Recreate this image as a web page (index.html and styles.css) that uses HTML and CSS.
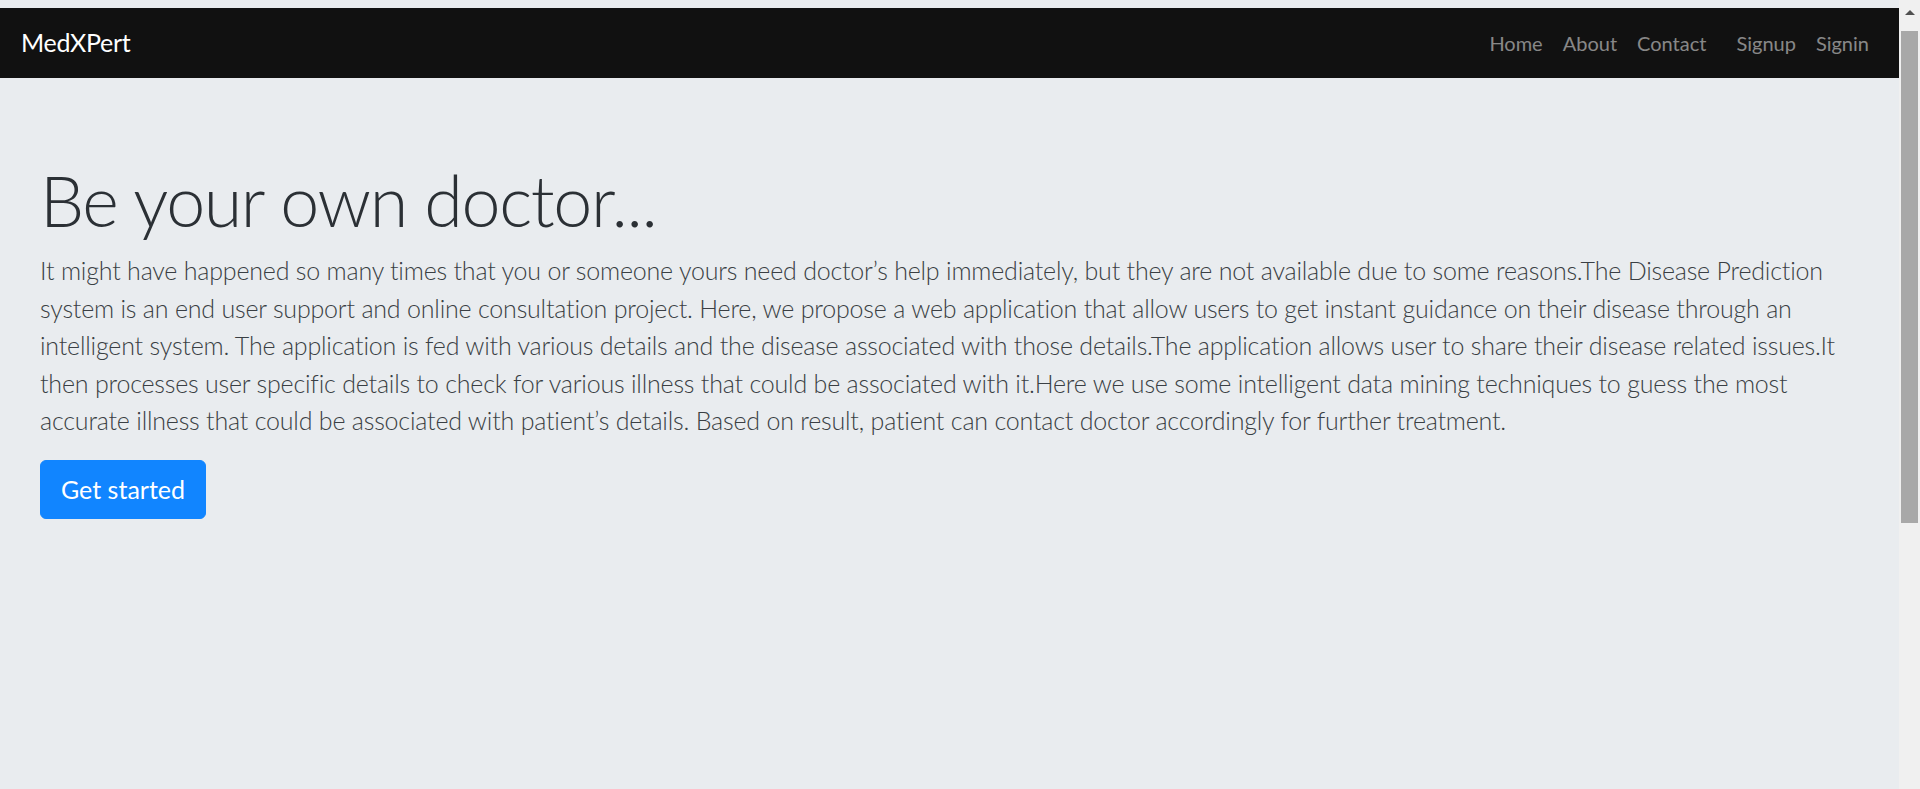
FILE: index.html
```html
<!DOCTYPE html>
<html lang="en">
<head>
<meta charset="utf-8">
<title>MedXPert</title>
<link rel="stylesheet" href="styles.css">
</head>
<body>
<div class="window">
  <div class="page">
    <nav class="navbar">
      <a class="brand" href="#">MedXPert</a>
      <div class="nav-right">
        <ul class="nav">
          <li><a href="#">Home</a></li>
          <li><a href="#">About</a></li>
          <li><a href="#">Contact</a></li>
        </ul>
        <ul class="nav nav-auth">
          <li><a href="#">Signup</a></li>
          <li><a href="#">Signin</a></li>
        </ul>
      </div>
    </nav>
    <main class="jumbotron">
      <h1 class="display">Be your own doctor...</h1>
      <p class="lead">It might have happened so many times that you or someone yours need doctor’s help immediately, but they are not available due to some reasons.The Disease Prediction system is an end user support and online consultation project. Here, we propose a web application that allow users to get instant guidance on their disease through an intelligent system. The application is fed with various details and the disease associated with those details.The application allows user to share their disease related issues.It then processes user specific details to check for various illness that could be associated with it.Here we use some intelligent data mining techniques to guess the most accurate illness that could be associated with patient’s details. Based on result, patient can contact doctor accordingly for further treatment.</p>
      <a class="btn" href="#">Get started</a>
    </main>
  </div>
  <div class="scrollbar" aria-hidden="true">
    <div class="scroll-btn"><span class="arrow-up"></span></div>
    <div class="scroll-track"><div class="scroll-thumb"></div></div>
  </div>
</div>
</body>
</html>
```

FILE: styles.css
```css
* {
  box-sizing: border-box;
}

html,
body {
  margin: 0;
  height: 100%;
  overflow: hidden;
}

body {
  background: #e9ecef;
  font-family: Lato, "Open Sans", sans-serif;
  color: #212529;
}

.window {
  display: flex;
  height: 789px;
}

.page {
  flex: 1;
  padding-top: 8px;
  min-width: 0;
}

.navbar {
  display: flex;
  align-items: center;
  justify-content: space-between;
  background: #111111;
  height: 70px;
  padding: 10px 20px;
}

.brand {
  color: #ffffff;
  font-size: 25px;
  line-height: 37.5px;
  letter-spacing: -0.3px;
  text-decoration: none;
  padding-left: 1px;
}

.nav-right {
  display: flex;
  gap: 10px;
}

.nav {
  display: flex;
  list-style: none;
  margin: 0;
  padding: 0;
}

.nav a {
  display: block;
  padding: 10px;
  color: rgba(255, 255, 255, 0.5);
  font-size: 20px;
  line-height: 30px;
  text-decoration: none;
}

.jumbotron {
  padding: 80px 40px;
}

.display {
  margin: 0 0 10px;
  font-size: 70px;
  font-weight: 300;
  line-height: 1.2;
  letter-spacing: -1.4px;
  color: #2b3035;
}

.lead {
  margin: 0 0 20px;
  font-size: 25px;
  font-weight: 300;
  line-height: 37.5px;
  letter-spacing: -0.2px;
  color: #3a3f44;
}

.btn {
  display: inline-block;
  padding: 10px 20px;
  border: 1px solid #1185ff;
  border-radius: 6px;
  background: #1185ff;
  color: #ffffff;
  font-size: 25px;
  line-height: 37.5px;
  text-decoration: none;
}

.scrollbar {
  width: 21px;
  flex: none;
  display: flex;
  flex-direction: column;
  background: #f0f0f0;
}

.scroll-btn {
  height: 21px;
  display: flex;
  align-items: center;
  justify-content: center;
  padding-top: 4px;
}

.arrow-up {
  width: 0;
  height: 0;
  border-left: 5px solid transparent;
  border-right: 5px solid transparent;
  border-bottom: 5px solid #505050;
}

.scroll-track {
  flex: 1;
  padding: 10px 2px 0;
}

.scroll-thumb {
  height: 492px;
  background: #a8a8a8;
}
```
